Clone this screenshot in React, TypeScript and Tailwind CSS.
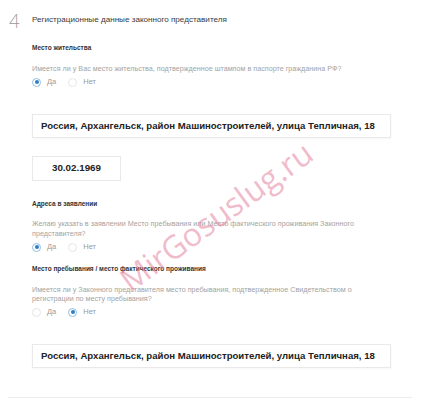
import React from "react";

function Radio({ checked, label }: { checked?: boolean; label: string }) {
  return (
    <span className="flex items-center gap-[6px]">
      <span
        className={`w-[9px] h-[9px] rounded-full border flex items-center justify-center ${
          checked ? "border-[#8ec0e6]" : "border-[#e6e6e6]"
        }`}
      >
        {checked && <span className="w-[4px] h-[4px] rounded-full bg-[#2f7fc4]" />}
      </span>
      <span className="text-[7.5px] leading-[12px] text-[#9a9a9a]">{label}</span>
    </span>
  );
}

function RadioRow({ yes }: { yes: boolean }) {
  return (
    <div className="flex items-center gap-[12px] h-[12px]">
      <Radio checked={yes} label="Да" />
      <Radio checked={!yes} label="Нет" />
    </div>
  );
}

const address = "Россия, Архангельск, район Машиностроителей, улица Тепличная, 18";

function App() {
  return (
    <div className="relative w-[424px] h-[406px] bg-white overflow-hidden font-['Liberation_Sans',Arial,sans-serif]">
      <div className="pt-[6px]">
        <div className="flex items-center h-[28px] pl-[9px]">
          <span className="w-[23px] text-[19px] leading-none font-light text-[#9a9a9a] font-['Lato','Liberation_Sans',sans-serif]">
            4
          </span>
          <span className="text-[8.1px] text-[#3a3a3a]">
            Регистрационные данные законного представителя
          </span>
        </div>

        <div className="pl-[32px] pr-[33px] flex flex-col">
          <p className="mt-[9px] text-[6.5px] leading-[10px] font-bold text-[#333]">Место жительства</p>
          <p className="mt-[11px] text-[7.2px] leading-[10px] text-[#a3a3a3]">
            Имеется ли у Вас место жительства, подтвержденное штампом в паспорте гражданина РФ?
          </p>
          <div className="mt-[2px]">
            <RadioRow yes={true} />
          </div>

          <div className="mt-[26px] h-[24px] border border-[#e9e9e9] shadow-[0_1px_2px_rgba(0,0,0,0.04)] flex items-center pl-[8px] text-[9.6px] font-bold text-[#222]">
            {address}
          </div>

          <div className="mt-[18px] w-[89px] h-[25px] border border-[#e9e9e9] flex items-center justify-center text-[9.8px] font-bold text-[#222]">
            30.02.1969
          </div>

          <p className="mt-[18px] text-[6.5px] leading-[10px] font-bold text-[#333]">Адреса в заявлении</p>
          <p className="mt-[10px] text-[7.2px] leading-[9.5px] text-[#a3a3a3] pr-[30px]">
            Желаю указать в заявлении Место пребывания или Место фактического проживания Законного представителя?
          </p>
          <div className="mt-[3px]">
            <RadioRow yes={true} />
          </div>

          <p className="mt-[11px] text-[6.5px] leading-[10px] font-bold text-[#333]">
            Место пребывания / место фактического проживания
          </p>
          <p className="mt-[11px] text-[7.2px] leading-[9px] text-[#a3a3a3] pr-[30px]">
            Имеется ли у Законного представителя место пребывания, подтвержденное Свидетельством о регистрации по месту пребывания?
          </p>
          <div className="mt-[3px]">
            <RadioRow yes={false} />
          </div>

          <div className="mt-[26px] h-[24px] border border-[#e9e9e9] shadow-[0_1px_2px_rgba(0,0,0,0.04)] flex items-center pl-[8px] text-[9.6px] font-bold text-[#222]">
            {address}
          </div>
        </div>

        <div className="mt-[29px] ml-[8px] mr-[12px] h-px bg-[#ececec]" />
      </div>

      <div className="absolute left-[216px] top-[216px] -translate-x-1/2 -translate-y-1/2 -rotate-[36deg] whitespace-nowrap text-[32px] text-[rgba(226,120,150,0.5)] font-['Open_Sans','Liberation_Sans',sans-serif]">
        MirGosuslug.ru
      </div>
    </div>
  );
}

export default App;
